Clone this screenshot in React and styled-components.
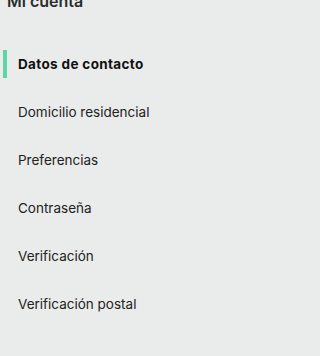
import React from "react";
import styled, { createGlobalStyle } from "styled-components";

const Global = createGlobalStyle`
  html, body { margin: 0; padding: 0; background: #eaeceb; }
  body { font-family: Inter, "Noto Sans", sans-serif; -webkit-font-smoothing: antialiased; }
`;

const Sidebar = styled.nav`
  width: 273px;
  height: 356px;
  background: #eaeceb;
  overflow: hidden;
  display: flex;
  flex-direction: column;
`;

const Title = styled.h2`
  margin: -10px 0 0 7px;
  font-size: 16px;
  line-height: 22px;
  font-weight: 600;
  color: #2b2d2c;
`;

const Menu = styled.ul`
  list-style: none;
  margin: 28px 0 0 0;
  padding: 0;
  display: flex;
  flex-direction: column;
`;

const Item = styled.li`
  position: relative;
  height: 48px;
  display: flex;
  align-items: center;
  padding-left: 18px;
  font-size: 13.5px;
  font-weight: ${(p) => (p.$active ? 700 : 400)};
  letter-spacing: ${(p) => (p.$active ? "0.35px" : "0")};
  color: ${(p) => (p.$active ? "#111" : "#222")};
  &::before {
    content: "";
    display: ${(p) => (p.$active ? "block" : "none")};
    position: absolute;
    left: 3px;
    top: 10px;
    width: 4px;
    height: 28px;
    background: #5dd6a6;
  }
`;

const items = [
  "Datos de contacto",
  "Domicilio residencial",
  "Preferencias",
  "Contraseña",
  "Verificación",
  "Verificación postal",
];

export default function App() {
  return (
    <>
      <Global />
      <Sidebar>
        <Title>Mi cuenta</Title>
        <Menu>
          {items.map((t, i) => (
            <Item key={t} $active={i === 0}>
              {t}
            </Item>
          ))}
        </Menu>
      </Sidebar>
    </>
  );
}
